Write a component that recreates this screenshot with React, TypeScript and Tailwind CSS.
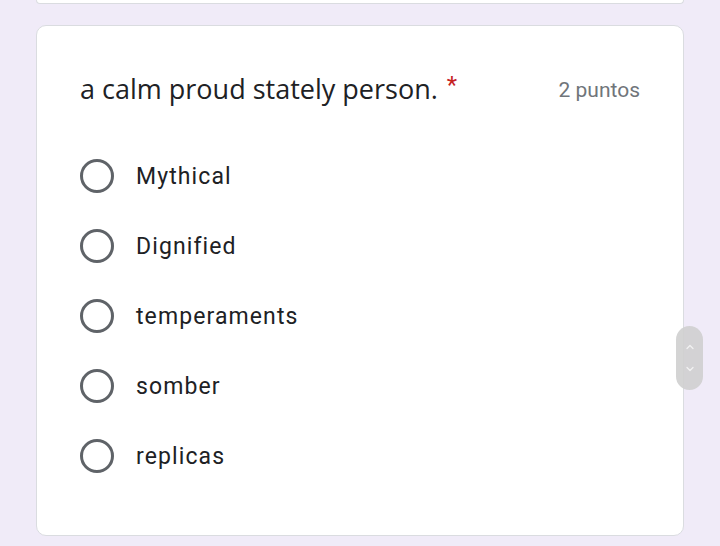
import { ChevronDown, ChevronUp } from 'lucide-react';

const options = ['Mythical', 'Dignified', 'temperaments', 'somber', 'replicas'];

export default function App() {
  return (
    <div className="relative min-h-[546px] w-full overflow-hidden bg-[#f0ebf8] font-['Roboto',sans-serif]">
      <div className="mx-[36px] h-[4px] rounded-b-[10px] border-x border-b border-[#dadce0] bg-white" />
      <div className="mx-[36px] mt-[21px] h-[511px] rounded-[10px] border border-[#dadce0] bg-white px-[43px] pt-[47px]">
        <div className="flex h-[32px] items-center justify-between">
          <div className="flex items-start font-['Open_Sans',sans-serif] text-[27px] text-[#202124]">
            <span>a calm proud stately person.</span>
            <span className="ml-[9px] font-['Roboto',sans-serif] text-[24px] leading-[32px] text-[#c5221f]">*</span>
          </div>
          <div className="mt-[3px] text-[21px] text-[#70757a]">2 puntos</div>
        </div>
        <div className="mt-[36px] flex flex-col">
          {options.map((o) => (
            <div key={o} className="flex h-[70px] items-center gap-[22px]">
              <div className="h-[34px] w-[34px] shrink-0 rounded-full border-[3px] border-[#5f6368]" />
              <span className="pt-[2px] text-[23px] tracking-[1.1px] text-[#202124]">{o}</span>
            </div>
          ))}
        </div>
      </div>
      <div className="absolute left-[676px] top-[326px] flex h-[64px] w-[27px] flex-col items-center justify-center gap-[10px] rounded-full bg-[#cfcfcf]/90 text-[#f2f2f2]">
        <ChevronUp size={12} strokeWidth={2.5} />
        <ChevronDown size={12} strokeWidth={2.5} />
      </div>
    </div>
  );
}
